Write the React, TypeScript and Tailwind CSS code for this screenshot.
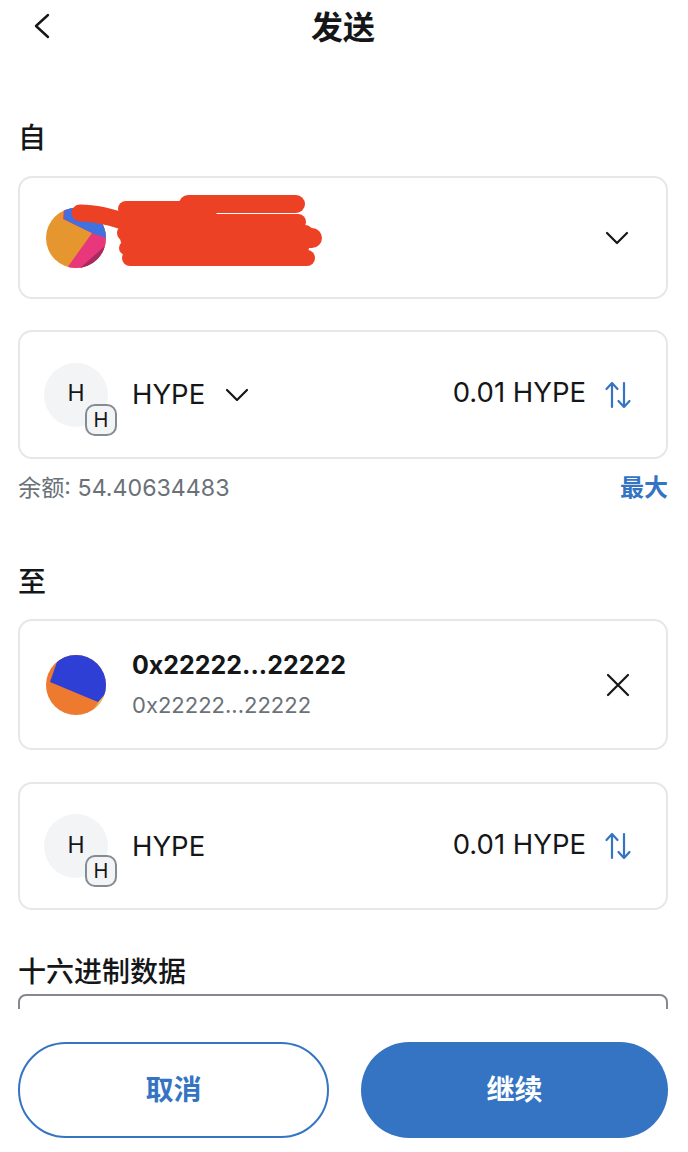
import React from "react";

const FONT = "font-['Inter','Noto_Sans_CJK_SC',sans-serif]";

function Chevron({ className = "" }: { className?: string }) {
  return (
    <svg width="26" height="16" viewBox="0 0 26 16" fill="none" className={className}>
      <path d="M3 3l10 10L23 3" stroke="#141618" strokeWidth="2.2" strokeLinecap="round" strokeLinejoin="round" />
    </svg>
  );
}

function Swap() {
  return (
    <svg width="28" height="28" viewBox="0 0 28 28" fill="none">
      <path d="M8 26V2M2.500 8l5.500-6 5.500 6" stroke="#3474c3" strokeWidth="2.200" strokeLinecap="round" strokeLinejoin="round" />
      <path d="M20 2v24M14.500 20l5.500 6 5.500-6" stroke="#3474c3" strokeWidth="2.200" strokeLinecap="round" strokeLinejoin="round" />
    </svg>
  );
}

function TokenAvatar() {
  return (
    <div className="relative w-16 h-16 rounded-full bg-[#f2f4f6] flex items-center justify-center shrink-0">
      <span className="text-[23px] text-[#141618] -mt-0.5">H</span>
      <div className="absolute left-[41px] top-[41px] w-[32px] h-[32px] rounded-[10px] border-2 border-[#858b92] bg-[#f2f4f6] flex items-center justify-center text-[20px] text-[#141618]">
        H
      </div>
    </div>
  );
}

function AmountRow({ chevron }: { chevron?: boolean }) {
  return (
    <div className="ml-[18px] mr-[20px] rounded-[14px] border-2 border-[#e5e7e9] flex items-center pl-6 pr-[34px] h-full">
      <TokenAvatar />
      <span className="ml-6 text-[27.5px] text-[#141618] mt-[1px]">HYPE</span>
      {chevron && <Chevron className="ml-[19px]" />}
      <span className="ml-auto text-[27.5px] text-[#141618] -mt-[3px]">0.01 HYPE</span>
      <span className="ml-[18px]">
        <Swap />
      </span>
    </div>
  );
}

export default function App() {
  return (
    <div className={`${FONT} w-[688px] h-[1152px] bg-white flex flex-col overflow-hidden`}>
      <header className="relative h-[56px] shrink-0 flex items-center justify-center">
        <svg width="20" height="28" viewBox="0 0 20 28" fill="none" className="absolute left-[32px] top-[12px]">
          <path d="M16 3L4 14l12 11" stroke="#141618" strokeWidth="2.4" strokeLinecap="round" strokeLinejoin="round" />
        </svg>
        <h1 className="text-[32px] font-bold text-[#141618] leading-none pr-[2px]">发送</h1>
      </header>

      <main className="flex-1 min-h-0 overflow-hidden flex flex-col">
        <div className="px-[18px] mt-[66px] h-[32px] flex items-center text-[28px] font-medium text-[#141618]">自</div>
        <div className="ml-[18px] mr-[20px] mt-[22px] h-[123px] rounded-[14px] border-2 border-[#e5e7e9] flex items-center pl-[26px] pr-[36px] relative shrink-0">
          <svg width="60" height="60" viewBox="0 0 60 60" className="shrink-0">
            <defs>
              <clipPath id="c1">
                <circle cx="30" cy="30" r="30" />
              </clipPath>
            </defs>
            <g clipPath="url(#c1)">
              <rect width="60" height="60" fill="#e6962f" />
              <path d="M18 0l-1 11 29 14L21 60h39V0z" fill="#e8377a" />
              <path d="M34 60L59 38h1v22z" fill="#a82a62" />
              <path d="M19 0l-1 11 28 14 14 5V0z" fill="#3f71e0" />
            </g>
          </svg>
          <svg width="260" height="90" viewBox="0 0 260 90" className="absolute left-[50px] top-[13px]" fill="none" stroke="#ec4124" strokeLinecap="round">
            <path d="M10 22C25 22 42 26 62 33" strokeWidth="17" />
            <path d="M56 18H140" strokeWidth="16" />
            <path d="M118 13H226" strokeWidth="18" />
            <path d="M58 31H228" strokeWidth="16" />
            <path d="M55 42H235" strokeWidth="16" />
            <path d="M60 47H242" strokeWidth="20" />
            <path d="M56 57H232" strokeWidth="14" />
            <path d="M60 67H237" strokeWidth="16" />
          </svg>
          <Chevron className="ml-auto" />
        </div>

        <div className="mt-[31px] h-[129px] shrink-0">
          <AmountRow chevron />
        </div>

        <div className="ml-[18px] mr-[20px] mt-[13px] flex justify-between items-center h-[32px]">
          <span className="text-[23.2px] text-[#6b7178]">余额: 54.40634483</span>
          <span className="text-[24px] font-bold text-[#3474c3]">最大</span>
        </div>

        <div className="px-[18px] mt-[62px] h-[32px] flex items-center text-[28px] font-medium text-[#141618] shrink-0">至</div>
        <div className="ml-[18px] mr-[20px] mt-[21px] h-[131px] rounded-[14px] border-2 border-[#e5e7e9] flex items-center pl-[26px] pr-[34px] shrink-0">
          <svg width="60" height="60" viewBox="0 0 60 60" className="shrink-0">
            <defs>
              <clipPath id="c2">
                <circle cx="30" cy="30" r="30" />
              </clipPath>
            </defs>
            <g clipPath="url(#c2)">
              <rect width="60" height="60" fill="#ee7a30" />
              <path d="M44 60L60 36v24z" fill="#eac15c" />
              <path d="M4 27L11 7 20 0h40v38l-8 9z" fill="#2d3fd5" />
            </g>
          </svg>
          <div className="ml-[26px] flex flex-col">
            <span className="text-[25px] font-bold text-[#141618] leading-[32px]">0x22222...22222</span>
            <span className="text-[22px] text-[#6b7178] leading-[32px] mt-[8px]">0x22222...22222</span>
          </div>
          <svg width="26" height="26" viewBox="0 0 26 26" fill="none" className="ml-auto mr-[1px]">
            <path d="M3 3l20 20M23 3L3 23" stroke="#141618" strokeWidth="2.2" strokeLinecap="round" />
          </svg>
        </div>

        <div className="mt-[32px] h-[128px] shrink-0">
          <AmountRow />
        </div>

        <div className="px-[18px] mt-[46px] h-[32px] flex items-center text-[28px] font-medium text-[#141618] shrink-0">十六进制数据</div>
        <div className="ml-[18px] mr-[20px] mt-[6px] h-[80px] rounded-[8px] border-2 border-[#85888c] shrink-0" />
      </main>

      <footer className="h-[143px] shrink-0 px-[18px] pt-[33px] flex gap-[32px]">
        <button className="w-[311px] h-[96px] rounded-full border-2 border-[#3474c3] text-[#3474c3] text-[28px] font-bold">取消</button>
        <button className="w-[307px] h-[96px] rounded-full bg-[#3474c3] text-white text-[28px] font-bold">继续</button>
      </footer>
    </div>
  );
}
